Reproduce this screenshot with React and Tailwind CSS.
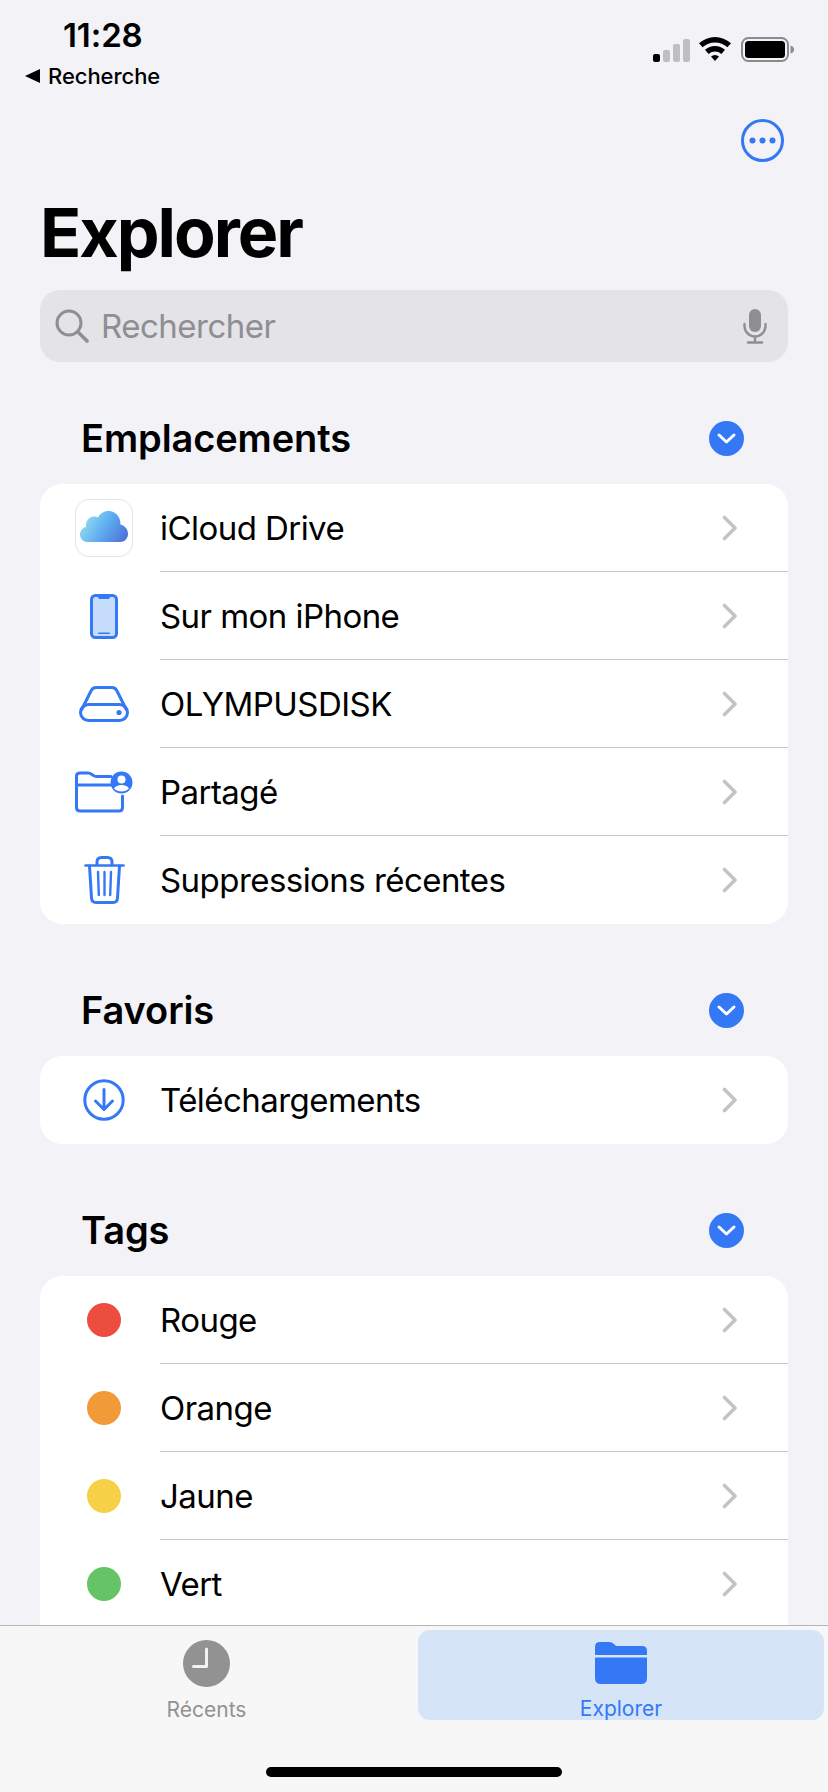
const BLUE = "#3478f6";

const Chevron = () => (
  <svg width="16" height="26" viewBox="0 0 16 26" fill="none" className="shrink-0">
    <path d="M2.5 2.5 L13 13 L2.5 23.5" stroke="#c4c4c6" strokeWidth="3.6" strokeLinecap="round" strokeLinejoin="round" />
  </svg>
);

const ICloudIcon = () => (
  <div className="w-[58px] h-[58px] rounded-[14px] border border-[#e4e4e6] bg-white flex items-center justify-center">
    <svg width="56" height="56" viewBox="1 1 56 56">
      <defs>
        <linearGradient id="cloud" x1="0" y1="0.3" x2="1" y2="0.7">
          <stop offset="0" stopColor="#9be0f2" />
          <stop offset="0.5" stopColor="#5fb0ef" />
          <stop offset="1" stopColor="#4f74dc" />
        </linearGradient>
      </defs>
      <path
        d="M12.5 43 C8.3 43 5 39.7 5 35.5 C5 31.5 8 28.3 11 28 C10.5 22 14 17.5 19 17.5 C20.5 17.5 21.5 17.8 23 18.5 C25 14.5 29 12 33.5 12 C40.5 12 45.5 17.5 45.5 25.5 C50 26.5 53 30.5 53 35 C53 39.7 49.5 43 45 43 Z"
        fill="url(#cloud)"
      />
    </svg>
  </div>
);

const PhoneIcon = () => (
  <svg width="28" height="45" viewBox="0 0 28 45" fill="none">
    <rect x="1.5" y="1.5" width="25" height="42" rx="4" fill="#c5dcfb" stroke={BLUE} strokeWidth="3" />
    <path d="M8 2 H20 V3 a2 2 0 0 1 -2 2 H10 a2 2 0 0 1 -2 -2 Z" fill={BLUE} />
    <rect x="8" y="38.5" width="12" height="1.6" rx="0.8" fill={BLUE} />
  </svg>
);

const DiskIcon = () => (
  <svg width="50" height="36" viewBox="0 0 50 36" fill="none" stroke={BLUE} strokeWidth="3">
    <path d="M2.5 24 L12 5 Q13.6 1.5 17 1.5 H33 Q36.4 1.5 38 5 L47.5 24" strokeLinejoin="round" />
    <rect x="1.5" y="18.5" width="47" height="16" rx="8" />
    <circle cx="40" cy="26.5" r="2.6" fill={BLUE} stroke="none" />
  </svg>
);

const SharedFolderIcon = () => (
  <svg width="58" height="42" viewBox="0 0 58 42" fill="none">
    <path
      d="M35 14 H1.5 V5 Q1.5 2 5 2 H13 Q15 2 17 3.5 L18.5 4.5 Q19.5 5.5 21.5 5.5 H36 M1.5 14 V36.5 Q1.5 40 5 40 H44 Q47.5 40 47.5 36.5 V25"
      stroke={BLUE}
      strokeWidth="3"
      strokeLinecap="round"
      strokeLinejoin="round"
    />
    <circle cx="46.5" cy="11.5" r="11" fill={BLUE} />
    <circle cx="46.5" cy="8.5" r="4" fill="#fff" />
    <path d="M39 17.5 Q41 14 46.5 14 Q52 14 54 17.5 Q51 20.5 46.5 20.5 Q42 20.5 39 17.5 Z" fill="#fff" />
  </svg>
);

const TrashIcon = () => (
  <svg width="41" height="48" viewBox="0 0 41 48" fill="none" stroke={BLUE} strokeWidth="3" strokeLinecap="round" strokeLinejoin="round">
    <path d="M1.5 9.5 H39.5" strokeWidth="2.6" />
    <path d="M13 8.5 V6 Q13 1.5 17.5 1.5 H23.5 Q28 1.5 28 6 V8.5" />
    <path d="M5.5 10 L7.5 42 Q7.8 46.5 12 46.5 H29 Q33.2 46.5 33.5 42 L35.5 10" />
    <path d="M14 16 L14.8 39 M20.5 16 V39 M27 16 L26.2 39" strokeWidth="2.4" />
  </svg>
);

const DownloadIcon = () => (
  <svg width="42" height="42" viewBox="0 0 42 42" fill="none" stroke={BLUE} strokeWidth="3" strokeLinecap="round" strokeLinejoin="round">
    <circle cx="21" cy="21" r="19.2" />
    <path d="M21 10.5 V30 M12.5 22 L21 30.5 L29.5 22" />
  </svg>
);

const Dot = ({ color }) => <span className="block w-[34px] h-[34px] rounded-full" style={{ backgroundColor: color }} />;

const Row = ({ icon, label, last }) => (
  <div className="flex h-[88px]">
    <div className="w-[120px] flex items-center justify-center pl-[8px]">{icon}</div>
    <div className={`flex-1 flex items-center justify-between pr-[50px] ${last ? "" : "border-b border-[#c6c6c8]"}`}>
      <span className="pt-[2px] text-[33px] tracking-[-0.55px] text-black">{label}</span>
      <Chevron />
    </div>
  </div>
);

const Section = ({ title, rows, className }) => (
  <section className={className}>
    <div className="h-[40px] flex items-center justify-between pl-[41px] pr-[44px]">
      <h2 className="text-[38px] font-semibold tracking-[-0.1px] text-black">{title}</h2>
      <span className="w-[35px] h-[35px] rounded-full bg-[#3478f6] flex items-center justify-center">
        <svg width="21" height="13" viewBox="0 0 21 13" fill="none">
          <path d="M3 3 L10.5 10 L18 3" stroke="#fff" strokeWidth="3" strokeLinecap="round" strokeLinejoin="round" />
        </svg>
      </span>
    </div>
    <div className="mt-[26px] bg-white rounded-[22px] overflow-hidden">
      {rows.map((r, i) => (
        <Row key={r.label} icon={r.icon} label={r.label} last={i === rows.length - 1} />
      ))}
    </div>
  </section>
);

const StatusIcons = () => (
  <div className="flex items-start pt-[37px] pr-[34px]">
    <div className="flex items-end gap-[3px] h-[24px] mt-[1px]">
      <span className="w-[7px] h-[8px] rounded-[2px] bg-black" />
      <span className="w-[7px] h-[12px] rounded-[2px] bg-[#bebec3]" />
      <span className="w-[7px] h-[18px] rounded-[2px] bg-[#bebec3]" />
      <span className="w-[7px] h-[23px] rounded-[2px] bg-[#bebec3]" />
    </div>
    <svg width="32" height="24" viewBox="0 0 32 24" className="ml-[9px]">
      <path d="M0 6.17 A24 24 0 0 1 32 6.17 L28.4 10.25 A18.5 18.5 0 0 0 3.6 10.25Z" />
      <path d="M6 12.85 A15 15 0 0 1 26 12.85 L22.36 16.94 A9.5 9.5 0 0 0 9.64 16.94Z" />
      <path d="M12 19.54 A6 6 0 0 1 20 19.54 L16 24Z" />
    </svg>
    <svg width="53" height="25" viewBox="0 0 53 25" className="ml-[10px]">
      <rect x="1" y="1" width="46" height="23" rx="6.5" fill="none" stroke="#8b8b8e" strokeWidth="2" />
      <rect x="4" y="4" width="40" height="17" rx="3.5" fill="#000" />
      <path d="M49.5 8.5 Q53 9.5 53 12.5 Q53 15.5 49.5 16.5 Z" fill="#8b8b8e" />
    </svg>
  </div>
);

export default function App() {
  const places = [
    { label: "iCloud Drive", icon: <ICloudIcon /> },
    { label: "Sur mon iPhone", icon: <PhoneIcon /> },
    { label: "OLYMPUSDISK", icon: <DiskIcon /> },
    { label: "Partagé", icon: <SharedFolderIcon /> },
    { label: "Suppressions récentes", icon: <TrashIcon /> },
  ];
  const favorites = [{ label: "Téléchargements", icon: <DownloadIcon /> }];
  const tags = [
    { label: "Rouge", icon: <Dot color="#ec4e3d" /> },
    { label: "Orange", icon: <Dot color="#f29a38" /> },
    { label: "Jaune", icon: <Dot color="#f6d047" /> },
    { label: "Vert", icon: <Dot color="#65c466" /> },
    { label: "Bleu", icon: <Dot color="#3478f6" /> },
  ];

  return (
    <div className="relative w-[828px] h-[1792px] overflow-hidden bg-[#f2f2f7] font-['Inter',sans-serif]">
      <header className="h-[119px] flex justify-between items-start">
        <div className="pl-[25px] pt-[16px]">
          <div className="pl-[38px] text-[33px] leading-[38px] font-semibold tracking-[-0.1px] text-black">11:28</div>
          <div className="flex items-center mt-[9px]">
            <svg width="15" height="14" viewBox="0 0 15 14">
              <path d="M15 0 V14 L0 7 Z" />
            </svg>
            <span className="ml-[8px] text-[22px] leading-[26px] font-medium tracking-[-0.05px] text-black">Recherche</span>
          </div>
        </div>
        <StatusIcons />
      </header>

      <div className="flex justify-end pr-[44px]">
        <svg width="43" height="43" viewBox="0 0 43 43" fill="none">
          <circle cx="21.5" cy="21.5" r="20" stroke={BLUE} strokeWidth="3" />
          <circle cx="11.5" cy="21.5" r="3" fill={BLUE} />
          <circle cx="21.5" cy="21.5" r="3" fill={BLUE} />
          <circle cx="31.5" cy="21.5" r="3" fill={BLUE} />
        </svg>
      </div>

      <main className="px-[40px]">
        <h1 className="mt-[30px] h-[80px] text-[68px] leading-[80px] font-bold tracking-[-2px] text-black">Explorer</h1>

        <div className="mt-[18px] h-[72px] rounded-[20px] bg-[#e3e3e8] flex items-center pl-[15px] pr-[21px]">
          <svg width="34" height="34" viewBox="0 0 34 34" fill="none" stroke="#8e8e93" strokeWidth="3" strokeLinecap="round">
            <circle cx="14" cy="14" r="12" />
            <path d="M23 23 L32 32" strokeWidth="3.6" />
          </svg>
          <span className="ml-[12px] flex-1 pt-[2px] text-[33px] tracking-[-0.5px] text-[#8e8e93]">Rechercher</span>
          <svg width="24" height="35" viewBox="0 0 24 35" fill="none">
            <rect x="6" y="0" width="12" height="23" rx="6" fill="#8e8e93" />
            <path d="M1.5 15 V17 A10.5 10.5 0 0 0 22.5 17 V15 M12 28 V33.5 M5 33.5 H19" stroke="#8e8e93" strokeWidth="2.4" strokeLinecap="round" />
          </svg>
        </div>

        <Section title="Emplacements" rows={places} className="mt-[56px]" />
        <Section title="Favoris" rows={favorites} className="mt-[66px]" />
        <Section title="Tags" rows={tags} className="mt-[66px]" />
      </main>

      <nav className="absolute left-0 right-0 top-[1625px] bottom-0 bg-[#f7f7f8] border-t border-[#b6b6b9]">
        <div className="flex h-[95px] mt-[4px]">
          <div className="w-[414px] flex flex-col items-center pt-[10px] pr-[1px]">
            <svg width="47" height="47" viewBox="0 0 47 47" fill="none" className="shrink-0">
              <circle cx="23.5" cy="23.5" r="23.5" fill="#929292" />
              <path d="M23.5 9 V26.5 H10.5" stroke="#f2f2f2" strokeWidth="3" strokeLinecap="round" strokeLinejoin="round" />
            </svg>
            <span className="mt-[10px] text-[21px] leading-[25px] text-[#929292]">Récents</span>
          </div>
          <div className="ml-[4px] w-[406px] h-[90px] rounded-[12px] bg-[#d5e4f6] flex flex-col items-center pt-[12px] overflow-hidden">
            <svg width="52" height="42" viewBox="0 0 52 42" fill="none" className="shrink-0">
              <path d="M0 13 V5 Q0 0 5 0 H14 Q17 0 19 2 L21 4 H47 Q52 4 52 9 V13 Z" fill={BLUE} />
              <path d="M0 15.5 H52 V36 Q52 42 46 42 H6 Q0 42 0 36 Z" fill={BLUE} />
            </svg>
            <span className="mt-[12px] shrink-0 text-[21px] leading-[25px] text-[#3478f6]">Explorer</span>
          </div>
        </div>
        <div className="absolute left-[266px] top-[141px] w-[296px] h-[10px] rounded-full bg-black" />
      </nav>
    </div>
  );
}
